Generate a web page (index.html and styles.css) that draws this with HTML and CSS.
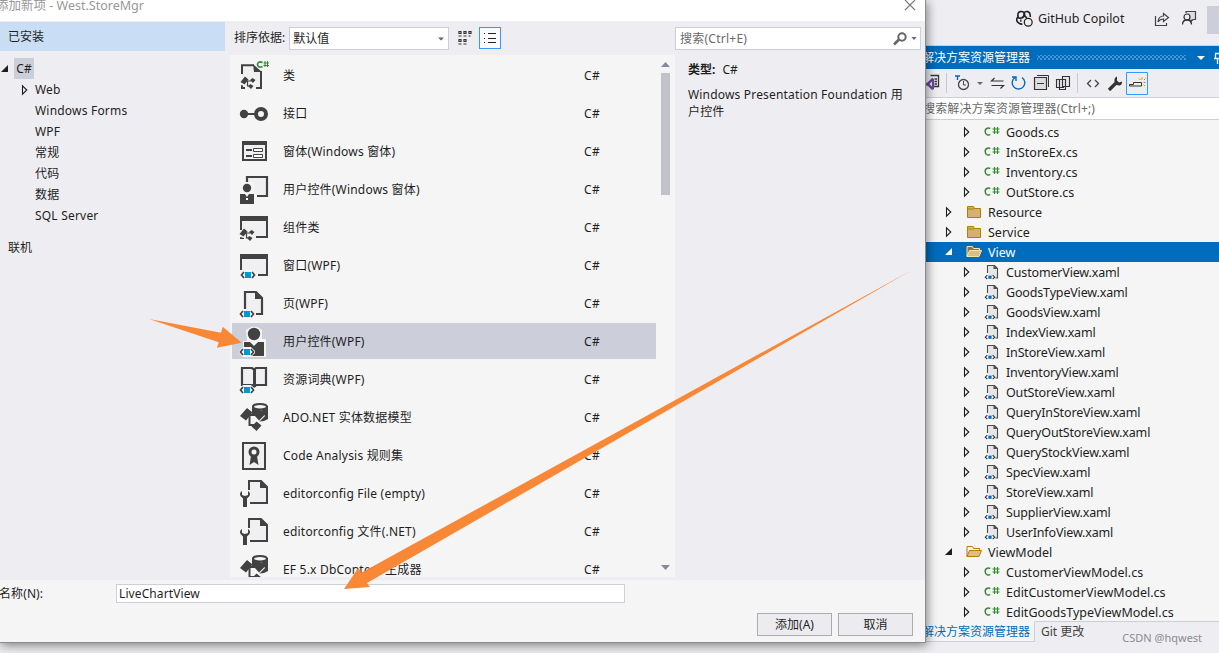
FILE: index.html
```html
<!DOCTYPE html>
<html lang="zh-CN">
<head>
<meta charset="utf-8">
<title>添加新项 - West.StoreMgr</title>
<link rel="stylesheet" href="styles.css">
</head>
<body>
<svg class="defs" aria-hidden="true">
  <symbol id="closed" viewBox="0 0 8 12"><path d="M1.5 1.8v8.400L5.800 6z" fill="none" stroke="#1e1e1e" stroke-width="1.100"/></symbol>
  <symbol id="open" viewBox="0 0 8 8"><path d="M7 0v7H0z" fill="currentColor"/></symbol>
  <symbol id="hash" viewBox="0 0 16 14"><path d="M6.200 3.600C5 2.600 1.200 2.500 1.200 6.500s3.800 4 5 3" fill="none" stroke="#388a34" stroke-width="1.500"/><path d="M10.500 2v7M13.500 2v7M8.500 4h7M8.500 7h7" stroke="#388a34" stroke-width="1.200"/></symbol>
  <symbol id="folder" viewBox="0 0 16 14"><path d="M1.500 12.500v-11h6l1 2h6v9z" fill="#d1b272" stroke="#b57d00"/><path d="M1.500 4h6.500" stroke="#b57d00"/></symbol>
  <symbol id="folderopen" viewBox="0 0 16 14"><path d="M1 11.500V1.500h5.500l1 2h6v2" fill="none" stroke="#b57d00"/><path d="M1 11.500l2.500-6h12l-2.500 6z" fill="#dcbf82" stroke="#b57d00"/></symbol>
  <symbol id="folderopen-w" viewBox="0 0 16 14"><path d="M1 11.500V1.500h5.500l1 2h6v2z" fill="#8f7440" stroke="#ffe3a3"/><path d="M1 11.500l2.500-6h12l-2.500 6z" fill="#dcbf82" stroke="#ffe3a3"/></symbol>
  <symbol id="xaml" viewBox="0 0 16 16"><path d="M3.500 9.500V1.500h7l3 3v9.500h-1" fill="#e6e6e8"/><path d="M3.500 9V1.500h7l3 3v9.500h-2" fill="none" stroke="#4d4d4d" stroke-width="1.100"/><path d="M9.500 1v4h4z" fill="#4d4d4d"/><path d="M3.300 11.200L1.300 13.200l2 2M8.700 11.200l2 2-2 2" fill="none" stroke="#333" stroke-width="1.100"/><path d="M4.400 11.600h3.200v3.200H4.400z" fill="#0069c0"/></symbol>
  <symbol id="tag" viewBox="0 0 18 10"><path d="M5 0h8l4 4v2l-4 4H5L1 6V4z" fill="#f5f5f5"/><path d="M5 2L2.500 5 5 8M13 2l2.500 3L13 8" fill="none" stroke="#424242" stroke-width="1.700"/><path d="M6 2h6v6H6z" fill="#0097db"/></symbol>
  <symbol id="parts" viewBox="0 0 16 14"><path d="M1 5l4-4 3 2 6 1 2 3-3 6-4 1-4-3-4-1z" fill="#f5f5f5"/><path d="M.5 7l4.500-5.500 3.500 3L4.500 9.500zM10 5l2.500-2L15.500 5 13 8zM8 11l2.500-2 3 2-2.500 3z" fill="#424242"/><path d="M6 6h5M7.500 6v5H10" fill="none" stroke="#424242" stroke-width="1.200"/></symbol>
  <symbol id="i-class" viewBox="0 0 32 32"><path d="M4 26V5h11l7 6v17h-6" fill="#f0eff1"/><path d="M4 14V5.200h12M23 11v17h-5M4 25v3h3" fill="none" stroke="#424242" stroke-width="2"/><path d="M15 4l9 8h-8z" fill="#424242"/><use href="#parts" x="2" y="15" width="16" height="14"/><path d="M24.500 2.500c-3-1.500-5 0-5 2s2 3.500 5 2" fill="none" stroke="#388a34" stroke-width="1.700"/><path d="M27 1v6M29.500 1v6M25.500 3H31M25.500 5.500H31" stroke="#388a34"/></symbol>
  <symbol id="i-interface" viewBox="0 0 32 32"><circle cx="6" cy="16" r="4.200" fill="#424242"/><path d="M9 16h9" stroke="#424242" stroke-width="2"/><circle cx="23" cy="16" r="5" fill="#f5f5f5" stroke="#424242" stroke-width="4"/></symbol>
  <symbol id="i-form" viewBox="0 0 32 32"><path d="M5 6h23v18H5z" fill="#f0eff1" stroke="#424242" stroke-width="2"/><path d="M4 5h25v4H4z" fill="#424242"/><path d="M8 14h6M8 20h6" stroke="#424242" stroke-width="2"/><path d="M15.500 12.500h9v3h-9zM15.500 18.500h9v3h-9z" fill="#fff" stroke="#424242"/></symbol>
  <symbol id="i-uc" viewBox="0 0 32 32"><path d="M9 9V3h20v19H19" fill="#f0eff1" stroke="#424242" stroke-width="2.200"/><path d="M3 8h13v14H3z" fill="#f5f5f5"/><circle cx="9" cy="14" r="4.200" fill="#424242"/><path d="M2 20h5l2 3 2-3h5v10H2z" fill="#424242"/><path d="M8 24h2v2H8z" fill="#fff"/></symbol>
  <symbol id="i-comp" viewBox="0 0 32 32"><path d="M3 5h26v21H3z" fill="#f0eff1"/><path d="M3 18V5h26v20H18M3 23v3h3" fill="none" stroke="#424242" stroke-width="2"/><path d="M2 4h28v5H2z" fill="#424242"/><use href="#parts" x="1" y="15" width="16" height="14"/></symbol>
  <symbol id="i-win" viewBox="0 0 32 32"><path d="M3 5h26v20H3z" fill="#f0eff1"/><path d="M3 20V5h26v20h-9" fill="none" stroke="#424242" stroke-width="2"/><path d="M2 4h28v5H2z" fill="#424242"/><use href="#tag" x="1" y="20" width="18" height="10"/></symbol>
  <symbol id="i-page" viewBox="0 0 32 32"><path d="M7 21V4h11l6 6v16h-6" fill="#f0eff1" stroke="#424242" stroke-width="2.200"/><path d="M17 3l8 8h-8z" fill="#424242"/><use href="#tag" x="0" y="21" width="18" height="10"/></symbol>
  <symbol id="i-ucwpf" viewBox="0 0 32 32"><path d="M8 4q8-7 16 0v9h4v18H5V15h4z" fill="#f5f5f5"/><circle cx="16" cy="8" r="6.200" fill="#424242"/><path d="M6 16h6l4 4 4-4h6v14H6z" fill="#424242"/><use href="#tag" x="0" y="21" width="18" height="10"/></symbol>
  <symbol id="i-book" viewBox="0 0 32 32"><path d="M4 21V4h10l2 1.500L18 4h10v17H18l-2 1.500-2-1.500z" fill="#f0eff1" stroke="#424242" stroke-width="2.200"/><path d="M15 5h3v18h-3z" fill="#424242"/><use href="#tag" x="0" y="21" width="18" height="10"/></symbol>
  <symbol id="i-ado" viewBox="0 0 32 32"><path d="M14 4v13q8 5 16 0V4z" fill="#424242"/><ellipse cx="22" cy="4.800" rx="7" ry="2.800" fill="#f5f5f5" stroke="#424242" stroke-width="2"/><path d="M2 13l7-7 4 3v4h5l5-5 4 6-7 7v8l-5-1-3-5-4-2-2-4z" fill="#f5f5f5"/><path d="M2 14l7-8 5.500 4.500L8 18.500zM16.500 13.500l6-5.500L27.500 12 21 18.500zM13.500 24.500l5-5L23.500 23.500l-5 5.500z" fill="#424242"/><path d="M10 13h9M11.500 13v10h5" fill="none" stroke="#424242" stroke-width="2"/></symbol>
  <symbol id="i-rule" viewBox="0 0 32 32"><path d="M5 3h22v26H5z" fill="#f0eff1" stroke="#424242" stroke-width="2"/><path d="M13 16l-1.500 9 4.500-3 4.500 3L19 16z" fill="#424242"/><circle cx="16" cy="12" r="4" fill="#f5f5f5" stroke="#424242" stroke-width="3"/></symbol>
  <symbol id="i-cfg" viewBox="0 0 32 32"><path d="M11 12V3h12l6 6v16H12" fill="#f0eff1" stroke="#424242" stroke-width="2"/><path d="M22 2l8 8h-8z" fill="#424242"/><path d="M2 12h10v18H4z" fill="#f5f5f5"/><path d="M4 13q-3 2-1.500 5l2.500 2.500V29h4v-8.500l2.500-2.500q1.500-3-1.500-5v4l-3 1-3-1z" fill="#424242"/></symbol>
</svg>

<main class="screen">
  <section class="ide">
    <header class="ide-top">
      <svg class="copilot" viewBox="0 0 16 16"><path d="M2 7Q1 2 4 1.500T7.500 3Q8.500 1 11 1.500t2.500 5M7.500 3q.5 4-2.500 4.500T2 6.500Q.5 7 .7 10 2 13 6 13.500M8 3q0 4 2.500 4" fill="none" stroke="#222" stroke-width="1.500"/><path d="M4.500 9v2" stroke="#222" stroke-width="1.300"/><circle cx="11.500" cy="11.500" r="3.700" fill="none" stroke="#222" stroke-width="1.200"/></svg>
      <span class="copilot-text">GitHub Copilot</span>
      <svg class="share" viewBox="0 0 16 16"><path d="M1.500 5v9.500h11V12" fill="none" stroke="#444" stroke-width="1.200"/><path d="M4 11q.5-6 5.500-6V2.500l5 4-5 4V8Q6 8 4 11z" fill="none" stroke="#444" stroke-width="1.200"/></svg>
      <svg class="feedback" viewBox="0 0 16 16"><path d="M5 3V1.500h9.500v8H12l-2 2v-2" fill="#ddd" stroke="#444" stroke-width="1.200"/><circle cx="6" cy="7" r="3" fill="#eeeef2" stroke="#333" stroke-width="1.200"/><path d="M1.500 14.500q0-4.500 4.500-4.500t4.500 4.500" fill="none" stroke="#333" stroke-width="1.300"/></svg>
      <span class="top-block"></span>
    </header>
    <div class="pane-title"><span>解决方案资源管理器</span><i class="grip"></i><svg class="title-icons" viewBox="0 0 24 14"><path d="M2 5h8L6 9z" fill="#fff"/><path d="M19 7.500h5M20.500 2.500v5M20 2.500h4M22.500 8v5" stroke="#fff" stroke-width="1.300"/></svg></div>
    <div class="pane-tools">
      <svg viewBox="0 0 294 29">
        <path d="M5.500 6.500h8v11H9M7 10h1M7 13h1M9.500 10H12M9.500 12.500H12M9.500 15H12" fill="none" stroke="#333" stroke-width="1.300"/><path d="M0 15l3-2 4-4 2 1v10l-2 1-4-4-3-1zM7 12.500L4.500 15 7 17.500z" fill="#68489a"/>
        <path d="M21.500 4v20M152.500 4v20" stroke="#c7c8d6"/>
        <path d="M30 7h5M32.500 7v4" stroke="#0069c0" stroke-width="1.400"/><circle cx="38.500" cy="15.500" r="5" fill="none" stroke="#444" stroke-width="1.300"/><path d="M38.500 12v4H41" fill="none" stroke="#444"/><path d="M52 13h6l-3 3z" fill="#666"/>
        <path d="M78.500 12H66.500l3-3M66.500 16.500h12l-3 3" fill="none" stroke="#333" stroke-width="1.200"/>
        <path d="M90 8.500a6.300 6.300 0 1 0 7 0M87 8h4v4" fill="none" stroke="#0069c0" stroke-width="1.400"/>
        <path d="M112 6.500h11.500V18" fill="none" stroke="#333"/><path d="M109.500 8.500h12v12h-12zM112 14.500h7" fill="#ddd" stroke="#333" stroke-width="1.200"/>
        <path d="M131.500 10.500h7v8h-7z" fill="#e4e4e6" stroke="#333" stroke-width="1.100"/><path d="M137.500 7.500h7v10h-7z" fill="#e4e4e6" stroke="#333" stroke-width="1.100"/><path d="M134.500 10.500h6v10h-6z" fill="none" stroke="#333" stroke-width="1.100"/>
        <path d="M166 11l-3.500 3.500L166 18M170 11l3.500 3.500L170 18" fill="none" stroke="#444" stroke-width="1.300"/>
        <path d="M184 21l7-7" stroke="#333" stroke-width="3.200"/><path d="M192 7.500q-3 1-2.500 5t5 4q3-1 2.500-4l-3 1-2-2z" fill="#333"/>
        <path d="M201.500 3.500h21v22h-21z" fill="none" stroke="#3399ff"/><path d="M204.500 17v-1.500h4v-2h8V17z" fill="#eee" stroke="#333"/><path d="M214 9.500l1.500 1.500M217 8.500v2M220.500 9.500L219 11M218.500 13.500h2M218.500 16l1.500 1" stroke="#c48700"/>
      </svg>
    </div>
    <div class="pane-search">搜索解决方案资源管理器(Ctrl+;)</div>
    <ul class="solution">
      <li class="leaf cs"><svg class="arr"><use href="#closed"/></svg><svg class="ico"><use href="#hash"/></svg><span>Goods.cs</span></li>
      <li class="leaf cs"><svg class="arr"><use href="#closed"/></svg><svg class="ico"><use href="#hash"/></svg><span>InStoreEx.cs</span></li>
      <li class="leaf cs"><svg class="arr"><use href="#closed"/></svg><svg class="ico"><use href="#hash"/></svg><span>Inventory.cs</span></li>
      <li class="leaf cs"><svg class="arr"><use href="#closed"/></svg><svg class="ico"><use href="#hash"/></svg><span>OutStore.cs</span></li>
      <li><svg class="arr"><use href="#closed"/></svg><svg class="ico"><use href="#folder"/></svg><span>Resource</span></li>
      <li><svg class="arr"><use href="#closed"/></svg><svg class="ico"><use href="#folder"/></svg><span>Service</span></li>
      <li class="picked"><svg class="arr opened"><use href="#open"/></svg><svg class="ico"><use href="#folderopen-w"/></svg><span>View</span></li>
      <li class="leaf"><svg class="arr"><use href="#closed"/></svg><svg class="ico"><use href="#xaml"/></svg><span>CustomerView.xaml</span></li>
      <li class="leaf"><svg class="arr"><use href="#closed"/></svg><svg class="ico"><use href="#xaml"/></svg><span>GoodsTypeView.xaml</span></li>
      <li class="leaf"><svg class="arr"><use href="#closed"/></svg><svg class="ico"><use href="#xaml"/></svg><span>GoodsView.xaml</span></li>
      <li class="leaf"><svg class="arr"><use href="#closed"/></svg><svg class="ico"><use href="#xaml"/></svg><span>IndexView.xaml</span></li>
      <li class="leaf"><svg class="arr"><use href="#closed"/></svg><svg class="ico"><use href="#xaml"/></svg><span>InStoreView.xaml</span></li>
      <li class="leaf"><svg class="arr"><use href="#closed"/></svg><svg class="ico"><use href="#xaml"/></svg><span>InventoryView.xaml</span></li>
      <li class="leaf"><svg class="arr"><use href="#closed"/></svg><svg class="ico"><use href="#xaml"/></svg><span>OutStoreView.xaml</span></li>
      <li class="leaf"><svg class="arr"><use href="#closed"/></svg><svg class="ico"><use href="#xaml"/></svg><span>QueryInStoreView.xaml</span></li>
      <li class="leaf"><svg class="arr"><use href="#closed"/></svg><svg class="ico"><use href="#xaml"/></svg><span>QueryOutStoreView.xaml</span></li>
      <li class="leaf"><svg class="arr"><use href="#closed"/></svg><svg class="ico"><use href="#xaml"/></svg><span>QueryStockView.xaml</span></li>
      <li class="leaf"><svg class="arr"><use href="#closed"/></svg><svg class="ico"><use href="#xaml"/></svg><span>SpecView.xaml</span></li>
      <li class="leaf"><svg class="arr"><use href="#closed"/></svg><svg class="ico"><use href="#xaml"/></svg><span>StoreView.xaml</span></li>
      <li class="leaf"><svg class="arr"><use href="#closed"/></svg><svg class="ico"><use href="#xaml"/></svg><span>SupplierView.xaml</span></li>
      <li class="leaf"><svg class="arr"><use href="#closed"/></svg><svg class="ico"><use href="#xaml"/></svg><span>UserInfoView.xaml</span></li>
      <li><svg class="arr opened"><use href="#open"/></svg><svg class="ico"><use href="#folderopen"/></svg><span>ViewModel</span></li>
      <li class="leaf cs"><svg class="arr"><use href="#closed"/></svg><svg class="ico"><use href="#hash"/></svg><span>CustomerViewModel.cs</span></li>
      <li class="leaf cs"><svg class="arr"><use href="#closed"/></svg><svg class="ico"><use href="#hash"/></svg><span>EditCustomerViewModel.cs</span></li>
      <li class="leaf cs"><svg class="arr"><use href="#closed"/></svg><svg class="ico"><use href="#hash"/></svg><span>EditGoodsTypeViewModel.cs</span></li>
    </ul>
    <footer class="pane-tabs"><span class="tab on">解决方案资源管理器</span><span class="tab">Git 更改</span><span class="mark">CSDN @hqwest</span></footer>
  </section>

  <section class="dialog">
    <header class="caption"><span>添加新项 - West.StoreMgr</span><svg class="close" viewBox="0 0 12 12"><path d="M1 1l10 10M11 1L1 11" stroke="#777" stroke-width="1.100"/></svg></header>
    <div class="body">
      <nav class="side">
        <div class="installed">已安装</div>
        <div class="root"><svg class="arr opened"><use href="#open"/></svg><b>C#</b></div>
        <div class="node"><svg class="arr"><use href="#closed"/></svg>Web</div>
        <div class="node">Windows Forms</div>
        <div class="node">WPF</div>
        <div class="node">常规</div>
        <div class="node">代码</div>
        <div class="node">数据</div>
        <div class="node">SQL Server</div>
        <div class="online">联机</div>
      </nav>
      <div class="center">
        <div class="sort"><span>排序依据:</span><div class="select"><span>默认值</span><svg viewBox="0 0 6 4"><path d="M0 .5h6L3 3.500z" fill="#666"/></svg></div>
          <svg class="grid" viewBox="0 0 14 14"><path d="M1 .5h2v2H1zM6 .5h2v2H6zM11 .5h2v2h-2zM1 8.500h2v2H1zM6 8.500h2v2H6zM.5 5h3M5.500 5h3M10.500 5h2M.5 13h3M5.500 13h3" fill="none" stroke="#333" stroke-width="1.200"/></svg>
          <span class="listbtn"><svg viewBox="0 0 14 14"><path d="M1 2.500h1M5 2.500h8M1 7.500h1M5 7.500h8M1 11.500h1M5 11.500h8" stroke="#222"/></svg></span>
        </div>
        <div class="listbox">
          <ul class="items">
            <li><svg><use href="#i-class"/></svg><span>类</span><em>C#</em></li>
            <li><svg><use href="#i-interface"/></svg><span>接口</span><em>C#</em></li>
            <li><svg><use href="#i-form"/></svg><span>窗体(Windows 窗体)</span><em>C#</em></li>
            <li><svg><use href="#i-uc"/></svg><span>用户控件(Windows 窗体)</span><em>C#</em></li>
            <li><svg><use href="#i-comp"/></svg><span>组件类</span><em>C#</em></li>
            <li><svg><use href="#i-win"/></svg><span>窗口(WPF)</span><em>C#</em></li>
            <li><svg><use href="#i-page"/></svg><span>页(WPF)</span><em>C#</em></li>
            <li class="chosen"><svg><use href="#i-ucwpf"/></svg><span>用户控件(WPF)</span><em>C#</em></li>
            <li><svg><use href="#i-book"/></svg><span>资源词典(WPF)</span><em>C#</em></li>
            <li><svg><use href="#i-ado"/></svg><span>ADO.NET 实体数据模型</span><em>C#</em></li>
            <li><svg><use href="#i-rule"/></svg><span>Code Analysis 规则集</span><em>C#</em></li>
            <li><svg><use href="#i-cfg"/></svg><span>editorconfig File (empty)</span><em>C#</em></li>
            <li><svg><use href="#i-cfg"/></svg><span>editorconfig 文件(.NET)</span><em>C#</em></li>
            <li><svg><use href="#i-ado"/></svg><span>EF 5.x DbContext 生成器</span><em>C#</em></li>
          </ul>
          <div class="scroll"><svg viewBox="0 0 9 5"><path d="M0 5h9L4.500 0z" fill="#868999"/></svg><i class="thumb"></i><svg viewBox="0 0 9 5"><path d="M0 0h9L4.500 5z" fill="#868999"/></svg></div>
        </div>
      </div>
      <aside class="info">
        <div class="search"><span>搜索(Ctrl+E)</span><svg viewBox="0 0 24 14"><circle cx="9" cy="5" r="3.700" fill="none" stroke="#666" stroke-width="2"/><path d="M6 7.500L1 12.500" stroke="#666" stroke-width="2.600"/><path d="M18.500 5h5L21 8z" fill="#666"/></svg></div>
        <p class="kind"><b>类型:</b>C#</p>
        <p class="desc">Windows Presentation Foundation 用户控件</p>
      </aside>
    </div>
    <footer class="form">
      <label>名称(N):</label><div class="name">LiveChartView</div>
      <div class="buttons"><span class="btn">添加(A)</span><span class="btn">取消</span></div>
    </footer>
  </section>

  <svg class="arrows" viewBox="0 0 1219 653"><path d="M149 319L221 332.700 222.700 326.700 241.700 342.700 217 347.700 218.700 342.300z" fill="#f98836"/><path d="M912 270L367 583 370 587 344 589 358.500 567.500 361.200 572.700z" fill="#f98836"/></svg>
</main>
</body>
</html>
```
FILE: styles.css
```css
* { box-sizing: border-box; }
body { margin: 0; background: #eeeef2; font: 12px/16px "Noto Sans", "Noto Sans CJK SC", sans-serif; color: #1e1e1e; }
ul { list-style: none; margin: 0; padding: 0; }
svg { display: block; flex: none; }
.defs { position: absolute; width: 0; height: 0; }
.screen { position: relative; width: 1219px; height: 653px; overflow: hidden; white-space: nowrap; }

.ide { display: flex; flex-direction: column; height: 653px; margin-left: 922px; }
.ide-top { display: flex; height: 46px; padding: 10px 0 0 94px; border-bottom: 1px solid #ccceda; }
.copilot { width: 17px; height: 17px; }
.copilot-text { margin-left: 5px; width: 120px; font-size: 12.500px; line-height: 17px; }
.share { width: 16px; height: 16px; margin-top: 1px; }
.feedback { width: 16px; height: 16px; margin-left: 11px; }
.top-block { width: 12px; height: 28px; margin: -4px 0 0 10px; background: #ccceda; flex: none; }
.pane-title { display: flex; align-items: center; height: 23px; background: #006cbe; color: #fff; }
.grip { width: 151px; height: 5px; margin-left: 7px; background: radial-gradient(circle, #69aee0 .6px, transparent .9px) 0 0/4px 4px, radial-gradient(circle, #69aee0 .6px, transparent .9px) 2px 2px/4px 4px; }
.title-icons { width: 24px; height: 14px; margin-left: 9px; }
.pane-tools { height: 28px; padding-left: 3px; }
.pane-tools svg { width: 294px; height: 29px; }
.pane-search { height: 23px; padding: 1px 0 0 1px; line-height: 20px; background: #fff; color: #6a6a6a; letter-spacing: .15px; border-top: 1px solid #ccceda; border-bottom: 1px solid #ccceda; }
.solution { height: 501px; padding-top: 2px; background: #f5f5f5; overflow: hidden; font-size: 12.500px; }
.solution li { display: flex; align-items: center; height: 20px; padding-left: 23px; }
.solution .leaf { padding-left: 41px; letter-spacing: -.16px; }
.solution .cs { letter-spacing: 0; }
.solution span { padding-top: 2px; }
.arr { width: 8px; height: 12px; }
.arr.opened { height: 8px; }
.solution .ico { width: 16px; height: 16px; margin: 0 6px 0 13px; }
.solution .picked { background: #006cbe; color: #fff; }
.pane-tabs { display: flex; height: 32px; }
.tab { height: 21px; padding: 2px 5px 0 6px; border-top: 1px solid #ccceda; color: #444; }
.tab.on { padding: 2px 4px 0 0; color: #006cbe; background: #f5f5f5; border-top-color: #f5f5f5; border-right: 1px solid #ccceda; border-bottom: 1px solid #ccceda; }
.mark { flex: 1; padding: 8px 0 0 33px; border-top: 1px solid #ccceda; color: #8b8b90; font-size: 11px; }

.dialog { position: absolute; left: 0; top: 0; display: flex; flex-direction: column; width: 926px; height: 643px; border-right: 1px solid #8b8b92; border-bottom: 1px solid #8b8b92; box-shadow: 1px 2px 10px rgba(0,0,0,.5); background: #f5f5f5; }
.caption { display: flex; justify-content: space-between; height: 21px; background: #fff; color: #999; }
.caption span { margin: -2px 0 0 -4px; font-size: 12.500px; }
.close { width: 12px; height: 12px; margin: -1px 9px 0 0; }
.body { display: grid; grid-template-columns: 225px 450px 1fr; height: 559px; background: #eeeef2; }
.side { letter-spacing: .2px; }
.installed { height: 29px; margin: 1px 0 7px; padding: 7px 8px; background: #c9def5; letter-spacing: 0; }
.root { display: flex; align-items: center; gap: 5px; height: 21px; padding-left: 1px; letter-spacing: 0; }
.root b { width: 20px; height: 21px; font-weight: 400; line-height: 21px; text-align: center; background: #ccceda; }
.node { display: flex; align-items: center; height: 21px; padding-left: 35px; }
.node .arr { margin: 0 6px 0 -14px; }
.online { margin-top: 14px; padding-left: 8px; letter-spacing: 0; }
.center { padding-left: 5px; }
.sort { display: flex; align-items: center; height: 34px; padding-left: 4px; }
.select { display: flex; align-items: center; justify-content: space-between; width: 160px; height: 23px; margin-left: 4px; padding: 0 4px 0 3px; background: #fff; border: 1px solid #ccceda; }
.select span { padding-top: 1px; }
.select svg { width: 6px; height: 4px; margin-top: 2px; }
.grid { width: 14px; height: 14px; margin-left: 9px; }
.listbtn { display: flex; align-items: center; justify-content: center; width: 22px; height: 22px; margin-left: 7px; border: 1px solid #3399ff; background: #fafafd; }
.listbtn svg { width: 14px; height: 14px; }
.listbox { display: flex; height: 522px; background: #f5f5f5; overflow: hidden; }
.items { width: 426px; padding: 2px 0 0 2px; }
.items li { display: flex; align-items: center; height: 36px; margin-bottom: 2px; padding-left: 6px; }
.items svg { width: 32px; height: 32px; margin-top: 1px; }
.items span { width: 301px; margin-left: 13px; padding-top: 2px; letter-spacing: .2px; }
.items em { padding-top: 2px; font-style: normal; letter-spacing: .3px; }
.items .chosen { background: #ccceda; }
.scroll { display: flex; flex-direction: column; width: 9px; margin-left: 5px; padding: 7px 0; }
.scroll svg { width: 9px; height: 5px; }
.thumb { height: 122px; margin: 6px 0 auto; background: #c2c3c9; }
.info { padding-top: 6px; }
.search { display: flex; justify-content: space-between; align-items: center; width: 246px; height: 23px; padding: 0 3px 0 4px; color: #6a6a6a; letter-spacing: .25px; background: #fff; border: 1px solid #ccceda; }
.search svg { width: 24px; height: 14px; }
.kind { margin: 12px 0 0 13px; }
.kind b { margin-right: 7px; }
.desc { width: 222px; margin: 8px 0 0 13px; line-height: 17px; letter-spacing: .18px; white-space: normal; }
.form { display: grid; grid-template-columns: 116px 509px; row-gap: 10px; padding-top: 4px; }
.form label { margin: 2px 0 0 -1px; letter-spacing: .1px; }
.name { height: 19px; padding-left: 2px; line-height: 17px; letter-spacing: .1px; background: #fff; border: 1px solid #ccceda; }
.buttons { grid-column: 1 / -1; display: flex; gap: 6px; padding-left: 757px; }
.btn { flex: none; width: 75px; height: 23px; line-height: 21px; text-align: center; background: #ececf0; border: 1px solid #acacac; }
.arrows { position: absolute; left: 0; top: 0; width: 1219px; height: 653px; }
```
